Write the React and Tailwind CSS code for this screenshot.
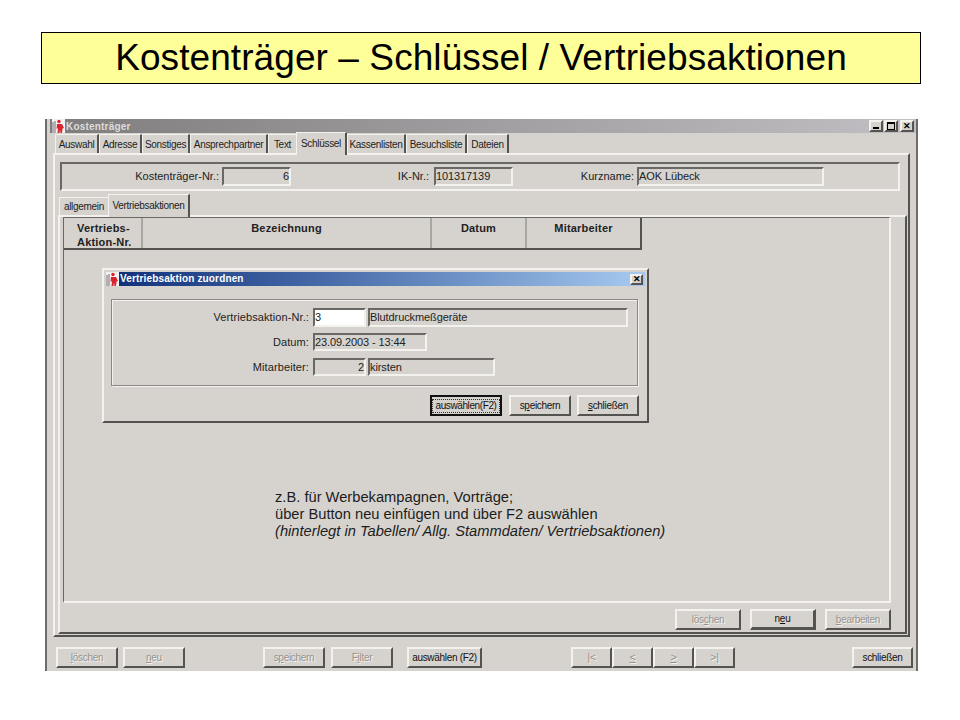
const raised = 'border-2 border-t-[#f4f2ee] border-l-[#f4f2ee] border-r-[#55534f] border-b-[#55534f]';
const sunken = 'border-2 border-t-[#6a6864] border-l-[#6a6864] border-r-[#f4f2ee] border-b-[#f4f2ee]';

const tabs = [
  { label: 'Auswahl', w: 'w-[44px]' },
  { label: 'Adresse', w: 'w-[43px]' },
  { label: 'Sonstiges', w: 'w-[48px]' },
  { label: 'Ansprechpartner', w: 'w-[78px]' },
  { label: 'Text', w: 'w-[28px]', open: true },
  { label: 'Schlüssel', w: 'w-[51px]', active: true },
  { label: 'Kassenlisten', w: 'w-[59px]' },
  { label: 'Besuchsliste', w: 'w-[61px]' },
  { label: 'Dateien', w: 'w-[42px]' },
];

function Logo() {
  return (
    <svg width="13" height="14" viewBox="0 0 13 14" className="shrink-0">
      <rect width="13" height="14" fill="#f6f1f1" />
      <path d="M1 3v11M3 2v12" stroke="#6d6d78" strokeWidth="1" />
      <circle cx="7" cy="2.500" r="1.700" fill="#d8232c" />
      <path d="M5 5h5l2 4-1.500.5L10 14H8.500L8 10.500 7.500 14H5.500L6 9 4.500 10z" fill="#d8232c" />
    </svg>
  );
}

function WinButton({ children, className = '', disabled }) {
  return (
    <button
      className={`${raised} h-[21px] shrink-0 bg-[#d6d3ce] text-[10px] leading-none tracking-[-0.3px] ${disabled ? 'text-[#96938e] [text-shadow:1px_1px_0_#f4f2ee]' : 'text-[#111]'} ${className}`}
    >
      {children}
    </button>
  );
}

function Field({ value, className = '', right, white }) {
  return (
    <div
      className={`${sunken} flex items-center text-[11px] tracking-[-0.1px] text-[#222] ${white ? 'bg-white' : 'bg-[#d6d3ce]'} ${right ? 'justify-end' : ''} ${className}`}
    >
      {value}
    </div>
  );
}

function DialogRow({ label, className = '', children }) {
  return (
    <div className={`flex items-center ${className}`}>
      <div className="w-[198px] pr-px text-right text-[11px] tracking-[0.1px] text-[#222]">{label}</div>
      <div className="ml-[3px] flex gap-[2px]">{children}</div>
    </div>
  );
}

function Dialog() {
  return (
    <div className={`${raised} absolute left-[38px] top-[50px] h-[155px] w-[547px] bg-[#d6d3ce] p-[2px]`}>
      <div className="flex h-[14px] items-center bg-gradient-to-r from-[#0f2d78] to-[#a6caf0] pr-[2px]">
        <Logo />
        <span className="ml-px pb-px text-[10px] font-bold tracking-[0.15px] text-white">Vertriebsaktion zuordnen</span>
        <div className={`${raised} ml-auto flex h-[11px] w-[13px] items-center justify-center bg-[#d6d3ce] text-[9px] font-bold leading-none text-black`}>✕</div>
      </div>
      <div className="ml-[5px] mt-[13px] h-[87px] w-[527px] border border-[#8a8884] pt-[8px] shadow-[1px_1px_0_#f4f2ee,inset_1px_1px_0_#f4f2ee]">
        <DialogRow label="Vertriebsaktion-Nr.:">
          <Field value="3" white className="h-[19px] w-[53px]" />
          <Field value="Blutdruckmeßgeräte" className="h-[19px] w-[260px]" />
        </DialogRow>
        <DialogRow label="Datum:" className="mt-[6px]">
          <Field value="23.09.2003 - 13:44" className="h-[18px] w-[114px]" />
        </DialogRow>
        <DialogRow label="Mitarbeiter:" className="mt-[7px]">
          <Field value="2" right className="h-[18px] w-[53px]" />
          <Field value="kirsten" className="h-[18px] w-[127px]" />
        </DialogRow>
      </div>
      <div className="ml-[324px] mt-[9px] flex">
        <button className="flex h-[21px] w-[72px] items-center justify-center border-2 border-[#111] bg-[#d6d3ce] text-[10px] tracking-[-0.4px] text-[#111]">
          <span className="border border-dotted border-[#333] px-[3px] py-px leading-none">auswählen(F2)</span>
        </button>
        <WinButton className="ml-[7px] w-[62px]">s<u>p</u>eichern</WinButton>
        <WinButton className="ml-[6px] w-[62px]"><u>s</u>chließen</WinButton>
      </div>
    </div>
  );
}

export default function App() {
  return (
    <div className="h-[720px] w-[960px] overflow-hidden bg-white pt-[32px] font-['Liberation_Sans',Arial,sans-serif]">
      <div className="ml-[41px] flex h-[52px] w-[880px] items-center justify-center border border-black bg-[#ffff99] text-[37px] tracking-[0.08px] text-black">
        Kostenträger – Schlüssel / Vertriebsaktionen
      </div>

      <div className="ml-[45px] mt-[35px] h-[552px] w-[873px] border-x-2 border-x-[#6f6d69] bg-[#d6d3ce]">
        {/* title bar */}
        <div className="ml-[3px] flex h-[14px] items-center bg-gradient-to-r from-[#7f7d7d] to-[#c2bfc4] pl-[2px] pr-[2px]">
          <Logo />
          <span className="ml-px text-[10px] font-bold tracking-[0.2px] text-[#dcdcdc]">Kostenträger</span>
          <div className="ml-auto flex gap-[1px]">
            <div className={`${raised} flex h-[12px] w-[14px] items-end justify-center bg-[#d6d3ce] pb-px`}><div className="h-[2px] w-[6px] bg-black" /></div>
            <div className={`${raised} flex h-[12px] w-[14px] items-center justify-center bg-[#d6d3ce]`}><div className="h-[8px] w-[8px] border border-t-2 border-black" /></div>
            <div className={`${raised} ml-px flex h-[12px] w-[14px] items-center justify-center bg-[#d6d3ce] text-[9px] font-bold leading-none text-black`}>✕</div>
          </div>
        </div>

        {/* main tabs */}
        <div className="relative z-10 ml-[8px] flex h-[20px] items-end">
          {tabs.map((t) => (
            <div
              key={t.label}
              className={`flex items-center justify-center border-l border-t border-l-[#f4f2ee] border-t-[#f4f2ee] text-[10px] tracking-[-0.3px] text-[#222] ${t.w} ${t.open ? '' : 'border-r-2 border-r-[#55534f]'} ${t.active ? '-mb-[2px] h-[23px] bg-[#d6d3ce] pb-px' : 'h-[19px] pt-px'}`}
            >
              {t.label}
            </div>
          ))}
        </div>

        {/* outer tab panel */}
        <div className="ml-[6px] h-[484px] w-[857px] border-2 border-b-[#55534f] border-l-[#f4f2ee] border-r-[#55534f] border-t-[#f4f2ee] pl-[5px] pt-[7px]">
          <div className={`${sunken} relative flex h-[29px] w-[840px] items-center text-[11px] text-[#222]`}>
            <div className="w-[157px] text-right">Kostenträger-Nr.:</div>
            <Field value="6" right className="ml-[3px] h-[19px] w-[69px]" />
            <div className="w-[138px] text-right">IK-Nr.:</div>
            <Field value="101317139" className="ml-[5px] h-[19px] w-[79px]" />
            <div className="w-[121px] text-right">Kurzname:</div>
            <Field value="AOK Lübeck" className="ml-[3px] h-[19px] w-[187px]" />
          </div>

          {/* sub tabs */}
          <div className="relative z-10 -ml-[1px] mt-[3px] flex h-[21px] items-end">
            <div className="flex h-[18px] w-[49px] items-center justify-center border-l border-t border-l-[#f4f2ee] border-t-[#f4f2ee] text-[10px] tracking-[-0.3px] text-[#222]">allgemein</div>
            <div className="-mb-[2px] flex h-[23px] w-[82px] items-center justify-center border-l border-r-2 border-t border-l-[#f4f2ee] border-r-[#55534f] border-t-[#f4f2ee] bg-[#d6d3ce] pb-[2px] text-[10px] tracking-[-0.3px] text-[#222]">Vertriebsaktionen</div>
          </div>

          {/* inner tab panel */}
          <div className="-ml-[2px] h-[419px] w-[849px] border-2 border-b-[#55534f] border-l-[#f4f2ee] border-r-[#55534f] border-t-[#f4f2ee] pl-[3px]">
            <div className="relative h-[386px] w-[828px] border border-b-2 border-r-2 border-b-[#f4f2ee] border-l-[#6a6864] border-r-[#f4f2ee] border-t-[#6a6864]">
              <div className="flex h-[32px] w-[578px] border-b-2 border-r-2 border-b-[#55534f] border-r-[#55534f] text-[11px] font-bold leading-[14px] tracking-[0.2px] text-[#222]">
                <div className="w-[79px] border-r-2 border-r-[#a8a6a1] pl-[13px] pt-[3px]">Vertriebs-<br />Aktion-Nr.</div>
                <div className="w-[289px] border-r-2 border-r-[#a8a6a1] pt-[3px] text-center">Bezeichnung</div>
                <div className="w-[95px] border-r-2 border-r-[#a8a6a1] pt-[3px] text-center">Datum</div>
                <div className="flex-1 pt-[3px] text-center">Mitarbeiter</div>
              </div>
              <div className="ml-[211px] mt-[239px] text-[14.7px] leading-[17px] text-[#1c1c1c]">
                <div>z.B. für Werbekampagnen, Vorträge;</div>
                <div>über Button neu einfügen und über F2 auswählen</div>
                <div className="italic">(hinterlegt in Tabellen/ Allg. Stammdaten/ Vertriebsaktionen)</div>
              </div>
              <Dialog />
            </div>
            <div className="ml-[612px] mt-[6px] flex">
              <WinButton disabled className="w-[66px]">lös<u>c</u>hen</WinButton>
              <WinButton className="ml-[9px] w-[66px] border-b-[3px] border-r-[3px] border-b-[#4a4845] border-r-[#4a4845]">n<u>e</u>u</WinButton>
              <WinButton disabled className="ml-[9px] w-[66px]"><u>b</u>earbeiten</WinButton>
            </div>
          </div>
        </div>

        {/* bottom buttons */}
        <div className="ml-[9px] mt-[10px] flex">
          <WinButton disabled className="w-[62px]"><u>l</u>öschen</WinButton>
          <WinButton disabled className="ml-[5px] w-[62px]"><u>n</u>eu</WinButton>
          <WinButton disabled className="ml-[78px] w-[62px]">s<u>p</u>eichern</WinButton>
          <WinButton disabled className="ml-[6px] w-[62px]">F<u>i</u>lter</WinButton>
          <WinButton className="ml-[14px] w-[75px]">auswählen (F2)</WinButton>
          <WinButton disabled className="ml-[89px] w-[41px] text-[11px]">|&lt;</WinButton>
          <WinButton disabled className="w-[41px] text-[11px]"><u>&lt;</u></WinButton>
          <WinButton disabled className="w-[41px] text-[11px]"><u>&gt;</u></WinButton>
          <WinButton disabled className="w-[41px] text-[11px]">&gt;|</WinButton>
          <WinButton className="ml-[117px] w-[61px]">schließen</WinButton>
        </div>
      </div>
    </div>
  );
}
